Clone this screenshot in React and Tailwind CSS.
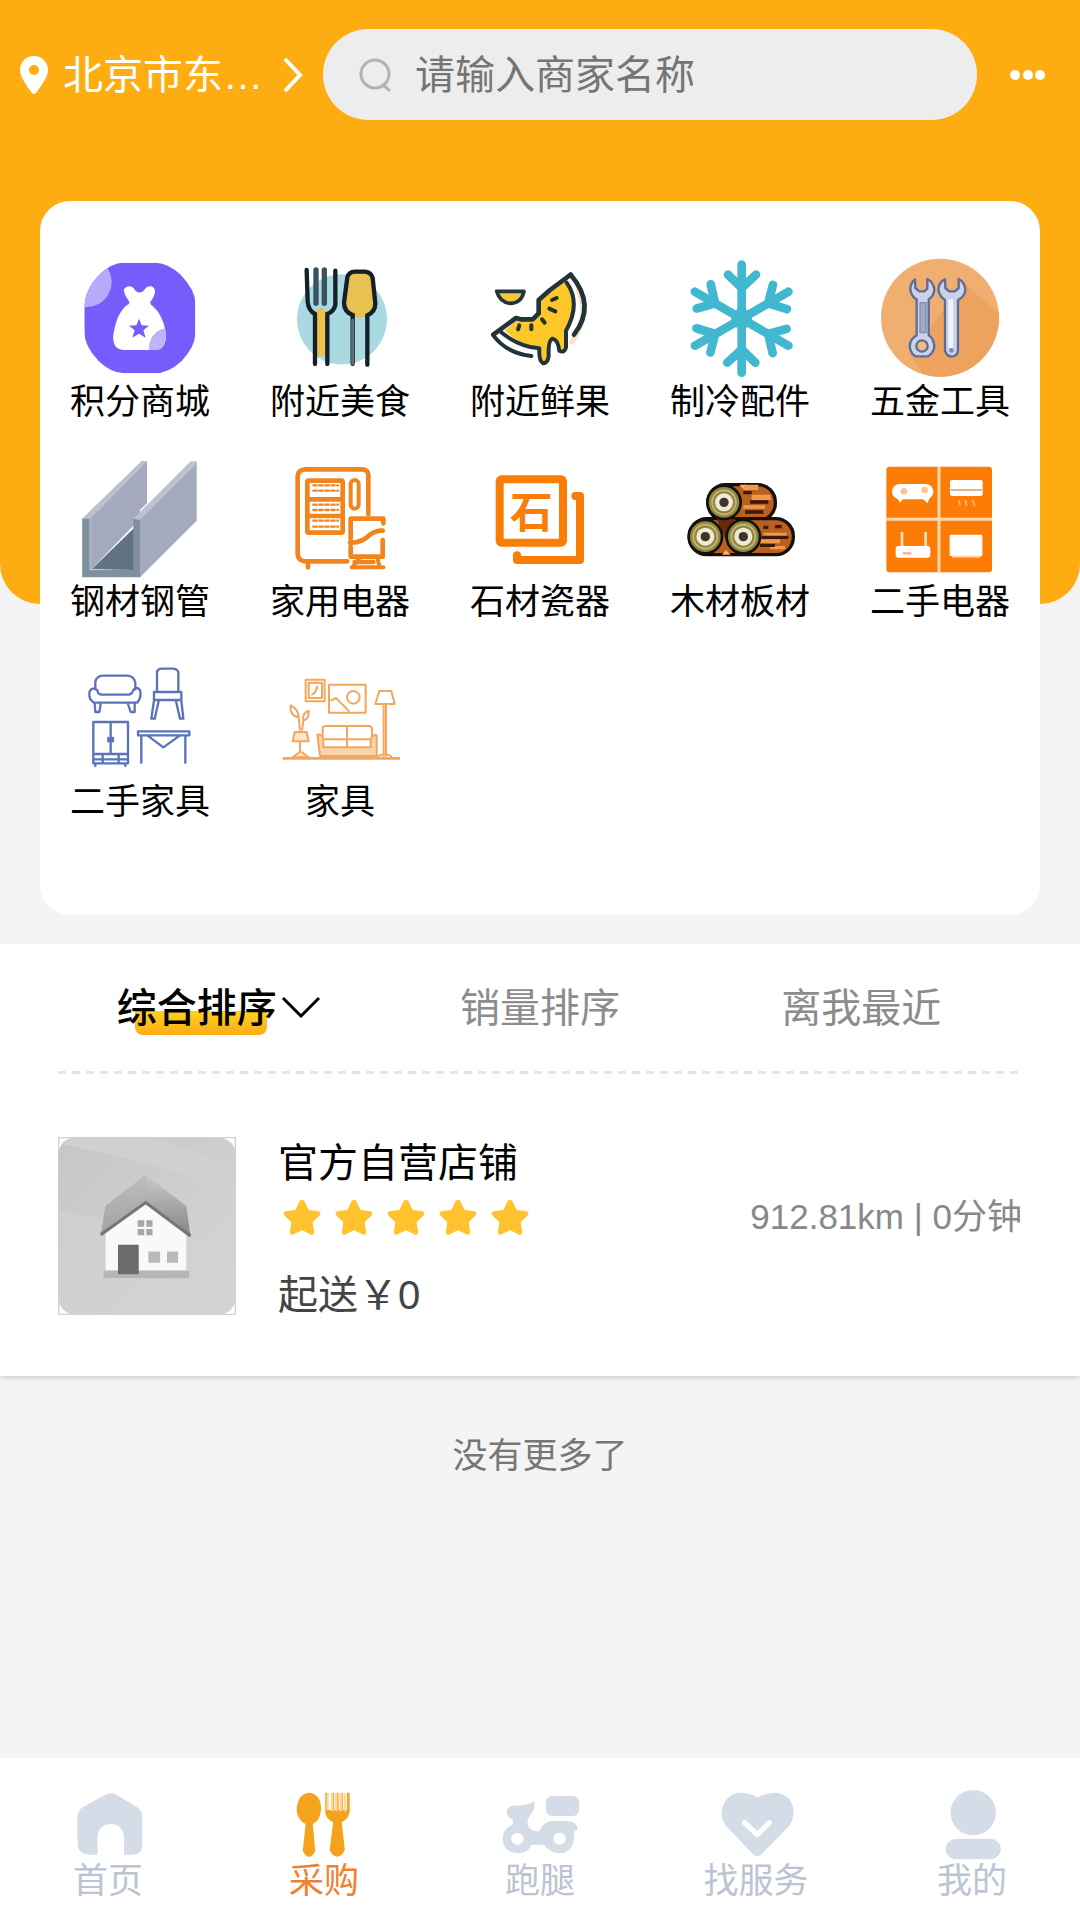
import React, { useState } from 'react';
import { Star } from 'lucide-react';

const iconClass = 'w-[120px] h-[120px]';

const PointsMallIcon = () => (
  <svg viewBox="120 54 360 360" className={iconClass} aria-hidden="true">
    <defs>
      <clipPath id="points-tile">
        <path d="M133 205Q133 150 178 104Q215 68 250 68H348Q385 70 422 104Q466 150 466 190V280Q466 320 424 364Q385 400 345 400H252Q212 398 175 362Q133 318 133 275Z" />
      </clipPath>
      <clipPath id="points-bag">
        <path d="M260 196Q272 192 266 182Q250 160 252 148Q262 132 280 143Q298 172 318 143Q338 132 345 150Q346 168 332 184Q328 194 338 198Q366 222 376 270Q384 328 346 330H252Q216 328 220 285Q230 220 260 196Z" />
      </clipPath>
    </defs>
    <g clipPath="url(#points-tile)">
      <rect x="130" y="64" width="340" height="340" fill="#785cfb" />
      <circle cx="140" cy="126" r="75" fill="#b8a9fb" />
    </g>
    <g clipPath="url(#points-bag)">
      <rect x="210" y="130" width="180" height="205" fill="#fff" />
      <circle cx="385" cy="322" r="58" fill="#c0b3fc" />
    </g>
    <path d="M297 236L305 256L327 257L310 271L317 293L297 281L277 293L284 271L267 257L289 256Z" fill="#785cfb" />
  </svg>
);

const FoodIcon = () => (
  <svg viewBox="720 54 360 360" className={iconClass} fill="none" strokeLinecap="round" aria-hidden="true">
    <circle cx="906" cy="238" r="135" fill="#a9dae1" />
    <path d="M828 216Q842 192 858 216V348H828Z" fill="#efc04d" />
    <path d="M958 232Q925 232 912 200L922 105Q930 94 958 94Q988 94 996 105L1006 200Q995 232 958 232Z" fill="#e9c052" />
    <g stroke="#141f27" strokeWidth="13">
      <path d="M800 90L803 185Q805 212 825 222V372" />
      <path d="M886 92V195Q882 214 862 222V372" />
      <path d="M828 90V190M853 90V190" stroke="#38535f" strokeWidth="16" />
      <path d="M938 372V225Q912 215 912 188L922 112Q926 96 945 95H975Q994 97 998 114L1006 190Q1006 216 982 226V374" />
      <path d="M938 240V372" stroke="#5b7079" strokeWidth="9" />
    </g>
  </svg>
);

const FruitIcon = () => (
  <svg viewBox="90 54 360 360" className={iconClass} fill="none" strokeLinecap="round" strokeLinejoin="round" aria-hidden="true">
    <path d="M385 150Q420 230 366 306" stroke="#ffe2c4" strokeWidth="16" />
    <path d="M140 154H222Q214 190 180 190Q150 188 140 154Z" fill="#f5c53c" stroke="#22343b" strokeWidth="11" />
    <path d="M165 271L205 238H248L268 215V182L322 128L350 124Q382 165 372 225Q362 262 348 278V325Q345 340 328 334L318 302Q304 294 296 308V360Q282 380 268 360V320Q205 315 165 271Z" fill="#fdc727" />
    <path d="M130 284L198 234L212 238H248L266 220V180L300 150L362 104" stroke="#22343b" strokeWidth="14" />
    <path d="M362 104Q440 195 372 284" stroke="#22343b" strokeWidth="14" />
    <path d="M350 128Q394 190 348 272V322Q344 340 328 332Q324 300 308 296Q294 300 296 350Q292 370 280 370Q266 364 268 325Q205 320 150 274" stroke="#22343b" strokeWidth="12" />
    <path d="M130 286Q170 340 244 348" stroke="#22343b" strokeWidth="12" />
    <g stroke="#27302c" strokeWidth="12">
      <path d="M306 180L320 174M298 206L316 214M276 238L284 248M244 256V268M208 256L204 268" />
    </g>
  </svg>
);

const snowArm = 'M875 236V74M875 144L834 104M875 144L918 104';

const SnowIcon = () => (
  <svg viewBox="690 54 360 360" className={iconClass} fill="none" stroke="#42b7d0" strokeWidth="26" strokeLinecap="round" aria-hidden="true">
    {[0, 60, 120, 180, 240, 300].map((angle) => (
      <path key={angle} d={snowArm} transform={`rotate(${angle} 875 236)`} />
    ))}
    <circle cx="875" cy="236" r="18" fill="#42b7d0" />
    <g fill="#42b7d0" stroke="none">
      {[0, 60, 120, 180, 240, 300].map((angle) => (
        <path key={angle} d="M875 172L848 118H902Z" transform={`rotate(${angle} 875 236)`} />
      ))}
    </g>
  </svg>
);

const ToolsIcon = () => (
  <svg viewBox="150 54 360 360" className={iconClass} strokeLinejoin="round" aria-hidden="true">
    <defs>
      <clipPath id="tools-disc">
        <circle cx="330" cy="233" r="177" />
      </clipPath>
    </defs>
    <circle cx="330" cy="233" r="177" fill="#f0ae70" />
    <path d="M400 130L520 230V420H290L240 345Z" fill="#eda35d" clipPath="url(#tools-disc)" />
    <g stroke="#5d6c9c" strokeWidth="7" fill="#cdd3e6">
      <path d="M255 118Q240 130 241 150Q246 172 260 178V286Q240 296 239 320Q244 345 258 349H294Q312 338 313 318Q310 294 296 286V178Q312 168 313 148Q310 126 292 117V146L283 154H268L256 144Z" />
      <path d="M345 118Q326 126 325 150Q330 172 345 180V332Q350 350 366 350Q382 348 384 332V180Q404 170 406 150Q404 126 386 117V144L374 154H358L346 144Z" />
      <circle cx="276" cy="318" r="17" fill="#f3b982" />
      <path d="M270 188V278H288V188Z" fill="#a2aac3" stroke="#7f8db2" strokeWidth="4" />
    </g>
    <path d="M362 178V325" stroke="#f4f5fb" strokeWidth="14" />
    <circle cx="364" cy="331" r="7" fill="#7c89b0" />
  </svg>
);

const SteelIcon = () => (
  <svg viewBox="120 54 360 360" className={iconClass} aria-hidden="true">
    <path d="M127 236L305 64H321V190L300 210V236L150 392L127 412Z" fill="#a4a9bd" />
    <path d="M127 236L305 64H321L148 240Z" fill="#bbc0d0" />
    <path d="M155 388L282 264V390Z" fill="#5f7380" />
    <path d="M127 236H148V390H280V236H302V412H127Z" fill="#7f909f" />
    <path d="M148 236H155V384L148 392Z" fill="#a9b2c2" />
    <path d="M300 236L470 66V242L300 412Z" fill="#a4a9bd" />
    <path d="M280 236L452 64H470V72L300 240Z" fill="#bcc1d1" />
  </svg>
);

const ApplianceIcon = () => (
  <svg viewBox="720 54 360 360" className={iconClass} fill="none" stroke="#f1841d" strokeWidth="14" strokeLinecap="round" strokeLinejoin="round" aria-hidden="true">
    <path d="M985 222V105Q984 88 965 88H795Q774 90 773 108V342Q774 362 795 364H922M804 368V382" />
    <rect x="802" y="122" width="106" height="156" rx="4" />
    <path d="M806 178H904M806 228H904" />
    <g strokeWidth="7" strokeDasharray="10 8">
      <path d="M820 136H894M820 152H894M820 194H894M820 210H894M820 242H894M820 260H894" />
    </g>
    <rect x="932" y="120" width="24" height="86" rx="12" strokeWidth="12" />
    <path d="M1030 250V236H932V296M930 308Q965 310 990 284Q1010 270 1028 272M932 320V350H1028V300" />
    <path d="M935 382H1030M958 354L940 378M1012 354L1018 378" strokeWidth="12" />
    <path d="M944 366H1000" />
  </svg>
);

const StoneIcon = () => (
  <svg viewBox="90 54 360 360" className={iconClass} fill="none" stroke="#f97d06" strokeWidth="24" strokeLinecap="round" strokeLinejoin="round" aria-hidden="true">
    <rect x="149" y="118" width="190" height="190" rx="6" />
    <path d="M376 168H390V360H201V346" />
    <text x="244" y="263" fontSize="128" fontWeight="700" textAnchor="middle" fill="#f97d06" stroke="none" fontFamily="Noto Sans CJK SC, sans-serif">石</text>
  </svg>
);

const logEnds = [
  { x: 822, y: 187 },
  { x: 766, y: 290 },
  { x: 880, y: 290 },
];

const WoodIcon = () => (
  <svg viewBox="690 54 360 360" className={iconClass} aria-hidden="true">
    <rect x="774" y="134" width="202" height="108" rx="52" fill="#b9601f" stroke="#14100c" strokeWidth="10" />
    <rect x="718" y="236" width="312" height="108" rx="52" fill="#b9601f" stroke="#14100c" strokeWidth="10" />
    <path d="M800 238H856L828 300Z" fill="#6b2a10" />
    <path d="M880 134H925V150H880ZM905 164H962V180H905ZM880 196H945V206H880Z" fill="#f1984b" />
    <path d="M940 278H1010V288H940ZM925 298H990V310H925ZM960 318H1005V328H960Z" fill="#f1984b" />
    <path d="M880 158H905M900 186H955M885 216H940M940 262H955M975 260H995M935 292H1015M930 316H975" stroke="#3b190b" strokeWidth="10" />
    <path d="M868 134H888L878 146ZM816 344L828 330L842 344Z" fill="#f6b070" />
    {logEnds.map(({ x, y }) => (
      <g key={x}>
        <circle cx={x} cy={y} r="50" fill="#8f8745" stroke="#14100c" strokeWidth="8" />
        <circle cx={x} cy={y} r="36" fill="none" stroke="#c5bb6b" strokeWidth="5" />
        <circle cx={x} cy={y} r="27" fill="#f2e8d6" />
        <circle cx={x} cy={y} r="14" fill="#3d3526" />
      </g>
    ))}
  </svg>
);

const UsedApplianceIcon = () => (
  <svg viewBox="150 654 360 360" className={iconClass} aria-hidden="true">
    <rect x="169" y="680" width="317" height="317" rx="10" fill="#fc7c05" />
    <path d="M327 680V997M169 838H486" stroke="#ffd9ae" strokeWidth="9" />
    <rect x="186" y="732" width="124" height="46" rx="23" fill="#fff" />
    <path d="M198 768L210 788L224 772ZM274 772L292 790L302 768Z" fill="#fff" />
    <circle cx="222" cy="754" r="10" fill="#ffc48c" />
    <circle cx="284" cy="750" r="10" fill="#ffc48c" />
    <rect x="360" y="720" width="98" height="48" rx="6" fill="#fff" />
    <path d="M362 750H456" stroke="#dca673" strokeWidth="5" />
    <path d="M386 780L390 796M406 780L410 798M428 780L434 798" stroke="#ffb36b" strokeWidth="6" />
    <path d="M216 876V922M287 876V922" stroke="#ffe0c0" strokeWidth="8" />
    <rect x="197" y="918" width="104" height="35" rx="8" fill="#fff" />
    <path d="M218 940H244" stroke="#ffb88d" strokeWidth="8" />
    <rect x="359" y="884" width="98" height="64" rx="3" fill="#fff" />
    <path d="M366 950H452" stroke="#ffd0a0" strokeWidth="6" />
  </svg>
);

const UsedFurnitureIcon = () => (
  <svg viewBox="120 54 360 360" className={iconClass} fill="none" stroke="#5b74b8" strokeWidth="7" strokeLinecap="round" strokeLinejoin="round" aria-hidden="true">
    <path d="M166 148V125Q170 108 188 107H262Q282 108 286 128V148M172 150V152Q174 164 186 164H264Q276 164 280 150Q290 138 300 150Q306 170 292 188H162Q144 178 149 154Q156 140 172 150" />
    <path d="M164 190L166 216H178L182 192M264 192L272 216H284V190" />
    <path d="M351 154V95Q354 86 365 86H400Q414 88 415 98V154M342 156H424V180H342ZM342 182L334 236H344L356 184M408 184L420 236H430L424 182" />
    <path d="M160 246H264V370H160ZM212 246V342M160 342H264M160 358H264M205 294V304M219 294V304M188 344V366M236 344V366M166 372V378M256 372V378" />
    <path d="M294 274H448V286H294ZM304 288V368M436 288V368M322 286L370 322L420 286" />
  </svg>
);

const FurnitureIcon = () => (
  <svg viewBox="720 54 360 360" className={iconClass} fill="none" stroke="#f2a75d" strokeWidth="6" strokeLinejoin="round" aria-hidden="true">
    <path d="M728 355H1080" strokeWidth="8" />
    <path d="M797 119H854V184H797ZM806 128H846V174H806ZM832 138Q828 160 814 164" />
    <path d="M867 134H977V218H867ZM872 182L888 174L928 214" />
    <circle cx="940" cy="172" r="19" />
    <path d="M1018 153H1054L1064 192H1006ZM1031 194V350M1038 194V350M1012 350Q1034 336 1056 350" />
    <path d="M752 196Q748 226 776 232Q776 208 752 196ZM806 212Q784 222 790 242Q808 236 806 212ZM776 232L780 272M790 242L786 272" />
    <path d="M764 276H800L806 304H758ZM780 306V335L758 352H806L784 335" fill="#fde3c8" />
    <path d="M832 284Q846 280 850 298V322H992V298Q998 282 1010 286V348H840Z" fill="#fbd5aa" />
    <path d="M848 290V262Q850 258 860 258H988Q996 260 996 268V290M921 260V320M850 298H992" />
  </svg>
);

const categories = [
  { name: '积分商城', icon: PointsMallIcon },
  { name: '附近美食', icon: FoodIcon },
  { name: '附近鲜果', icon: FruitIcon },
  { name: '制冷配件', icon: SnowIcon },
  { name: '五金工具', icon: ToolsIcon },
  { name: '钢材钢管', icon: SteelIcon },
  { name: '家用电器', icon: ApplianceIcon },
  { name: '石材瓷器', icon: StoneIcon },
  { name: '木材板材', icon: WoodIcon },
  { name: '二手电器', icon: UsedApplianceIcon },
  { name: '二手家具', icon: UsedFurnitureIcon },
  { name: '家具', icon: FurnitureIcon },
];

const navItems = [
  {
    name: '首页',
    box: '209 87 209 216',
    icon: (
      <path d="M306 104Q322 96 338 104L398 142Q413 152 413 170V258Q410 284 385 284H360V230Q357 194 322 192Q286 194 283 230V284H258Q228 282 225 255V170Q226 152 240 142Z" />
    ),
  },
  {
    name: '采购',
    box: '836 87 209 216',
    icon: (
      <>
        <path d="M897 98Q932 102 932 148Q930 182 908 192L915 272Q908 290 897 290Q886 290 879 272L887 192Q862 180 861 148Q864 102 897 98Z" />
        <path d="M944 98H951V150H964V98H970V150H976V98H983V150H989V98H995V150H1007V98H1015V155Q1012 176 992 187L1001 270Q992 290 979 290Q964 288 957 270L967 187Q944 174 944 155Z" />
        <path d="M951 100V150M964 100V154M976 100V154M989 100V154M1001 100V154" stroke="#fbd79b" strokeWidth="7" />
      </>
    ),
  },
  {
    name: '跑腿',
    box: '1464 87 209 216',
    icon: (
      <>
        <rect x="1586" y="108" width="96" height="60" rx="18" />
        <path
          fillRule="evenodd"
          d="M1552 124Q1556 148 1540 165Q1524 190 1540 206Q1550 216 1566 213Q1574 190 1600 183H1650Q1674 184 1678 208Q1678 214 1667 212Q1672 278 1626 280Q1594 276 1580 254H1544Q1536 278 1503 280Q1462 276 1460 236Q1462 206 1488 195Q1492 188 1488 178Q1468 170 1474 148Q1480 134 1500 137Q1528 138 1552 124ZM1503 218A18 18 0 1 0 1503 254A18 18 0 1 0 1503 218ZM1625 218A18 18 0 1 0 1625 254A18 18 0 1 0 1625 218Z"
        />
      </>
    ),
  },
  {
    name: '找服务',
    box: '523 87 209 216',
    icon: (
      <>
        <path d="M631 113Q655 98 685 98Q735 104 737 160Q735 186 718 204L642 284Q631 292 620 284L546 204Q528 184 527 160Q532 104 582 98Q610 98 631 113Z" />
        <path d="M594 188L631 224L666 188" fill="none" stroke="#fff" strokeWidth="15" strokeLinecap="round" strokeLinejoin="round" />
      </>
    ),
  },
  {
    name: '我的',
    box: '1150 87 209 216',
    icon: (
      <>
        <ellipse cx="1258" cy="158" rx="66" ry="68" />
        <rect x="1178" y="236" width="160" height="62" rx="31" />
      </>
    ),
  },
];

const StoreThumb = () => (
  <svg viewBox="168 622 516 532" preserveAspectRatio="none" className="w-[178px] h-[178px] shrink-0" role="img" aria-label="店铺图片">
    <defs>
      <linearGradient id="thumb-bg" x1="0" y1="0" x2="1" y2="1">
        <stop offset="0" stopColor="#c6c6c6" />
        <stop offset="1" stopColor="#d6d6d6" />
      </linearGradient>
      <linearGradient id="thumb-roof" x1="0" y1="0" x2="0" y2="1">
        <stop offset="0" stopColor="#c9c9c9" />
        <stop offset="1" stopColor="#858585" />
      </linearGradient>
      <clipPath id="thumb-clip">
        <rect x="170" y="624" width="512" height="528" rx="48" />
      </clipPath>
    </defs>
    <rect x="170" y="624" width="512" height="528" fill="#fff" stroke="#d2d2d2" strokeWidth="4" />
    <g clipPath="url(#thumb-clip)">
      <rect x="168" y="622" width="516" height="532" fill="url(#thumb-bg)" />
      <path d="M440 622L684 710V790Q600 750 380 690L168 640V622Z" fill="#d0d0d0" />
      <path d="M168 840L684 948V1154H168Z" fill="#d2d2d2" opacity="0.6" />
    </g>
    <rect x="300" y="1022" width="248" height="22" fill="#a9a9a9" opacity="0.7" />
    <path d="M306 900L422 822L540 900V1020H306Z" fill="#f9f9f9" />
    <path d="M422 735L540 828L552 918L422 818L292 916L306 828Z" fill="url(#thumb-roof)" />
    <path d="M422 735L306 828L292 910L424 810Z" fill="#b5b5b5" opacity="0.6" />
    <path d="M292 914L422 818L552 918" fill="none" stroke="#767676" strokeWidth="9" />
    <rect x="342" y="944" width="60" height="88" fill="#6b6b6b" />
    <path d="M399 871H418V890H399ZM424 871H442V890H424ZM399 897H418V916H399ZM424 897H442V916H424Z" fill="#a6a6a6" />
    <path d="M430 964H464V998H430ZM484 964H516V998H484Z" fill="#b9b9b9" />
  </svg>
);

const SortTabs = ({ sort, setSort }) => {
  return (
    <div className="grid grid-cols-3 h-[127px] items-center">
      {['综合排序', '销量排序', '离我最近'].map((name, i) => (
        <button
          key={name}
          onClick={() => setSort(i)}
          className={
            sort === i
              ? 'flex items-center justify-center gap-1 text-[40px] leading-[52px] font-medium text-black cursor-pointer'
              : 'flex items-center justify-center text-[40px] leading-[52px] text-[#8c8c8c] cursor-pointer'
          }
        >
          <span className="relative isolate">
            {sort === i && (
              <span className="absolute -z-10 left-[18px] right-[10px] -bottom-px h-6 rounded-b-lg bg-linear-to-b from-[#ffd21c] to-[#fbab16]" />
            )}
            {name}
          </span>
          {i === 0 && (
            <svg viewBox="0 0 40 24" className="w-10 h-6" fill="none" stroke="currentColor" strokeWidth="3" aria-hidden="true">
              <path d="M2 2L20 20L38 2" />
            </svg>
          )}
        </button>
      ))}
    </div>
  );
};

const App = () => {
  const [sort, setSort] = useState(0);
  const [active, setActive] = useState(1);
  const [keyword, setKeyword] = useState('');

  return (
    <div className="min-h-screen flex flex-col bg-[#f4f4f4] font-['Liberation_Sans','Noto_Sans_CJK_SC',sans-serif]">
      {/* Header */}
      <header className="flex items-center pt-[29px] pb-[484px] pl-5 pr-[34px] rounded-b-[40px] bg-[#fdad11] text-white">
        <button className="flex items-center shrink-0 cursor-pointer">
          <svg viewBox="0 0 28 38" className="w-7 h-[38px]" fill="#fff" fillRule="evenodd" aria-hidden="true">
            <path d="M14 0C6 0 0 6 0 14C0 21 7 30 12 37Q14 39 16 37C21 30 28 21 28 14C28 6 22 0 14 0ZM14 9A5 5 0 1 1 14 19A5 5 0 1 1 14 9Z" />
          </svg>
          <span className="w-[200px] ml-[15px] text-left text-[40px] leading-[52px] whitespace-nowrap">北京市东…</span>
          <svg viewBox="0 0 20 36" className="w-5 h-9 ml-5" fill="none" stroke="#fff" strokeWidth="4" aria-hidden="true">
            <path d="M2 2L17 18L2 34" />
          </svg>
        </button>
        <label className="flex flex-1 min-w-0 items-center h-[91px] ml-5 pl-9 pr-6 rounded-full bg-[#ededed]">
          <svg viewBox="0 0 32 34" className="w-8 h-[34px] shrink-0" fill="none" stroke="#b3b3b3" strokeWidth="3" strokeLinecap="round" aria-hidden="true">
            <circle cx="16" cy="16" r="14" />
            <path d="M24 27L30 32" />
          </svg>
          <input
            type="text"
            aria-label="搜索商家"
            value={keyword}
            onChange={(e) => setKeyword(e.target.value)}
            placeholder="请输入商家名称"
            className="flex-1 min-w-0 ml-6 bg-transparent text-[40px] leading-[52px] text-gray-800 placeholder:text-[#757575] focus:outline-none"
          />
        </label>
        <button aria-label="更多" className="ml-8 shrink-0 cursor-pointer">
          <svg viewBox="0 0 37 12" className="w-[37px] h-3" fill="#fff" aria-hidden="true">
            <circle cx="6" cy="6" r="5" />
            <circle cx="19" cy="6" r="5" />
            <circle cx="31" cy="6" r="5" />
          </svg>
        </button>
      </header>

      {/* Categories */}
      <section className="-mt-[403px] mx-10 py-[57px] rounded-[30px] bg-white grid grid-cols-5">
        {categories.map(({ name, icon: Icon }) => (
          <a key={name} href="#" className="flex flex-col items-center pb-8 text-[35px] leading-[48px] text-black">
            <Icon />
            {name}
          </a>
        ))}
      </section>

      {/* Store list */}
      <section className="mt-[29px] px-[58px] pb-[55px] bg-white shadow-md">
        <SortTabs sort={sort} setSort={setSort} />
        <div className="h-[3px] bg-[repeating-linear-gradient(90deg,#e4e4e4_0_8px,transparent_8px_14px)]" />
        <a href="#" className="flex pt-[63px]">
          <StoreThumb />
          <div className="ml-[42px]">
            <h2 className="text-[40px] leading-[52px] text-black">官方自营店铺</h2>
            <div className="flex gap-3 mt-[9px] pl-1">
              {[1, 2, 3, 4, 5].map((n) => (
                <Star key={n} className="w-10 h-10 text-[#fec32f] fill-[#fec32f]" />
              ))}
            </div>
            <p className="mt-[31px] text-[40px] leading-[52px] text-[#444]">起送￥0</p>
          </div>
          <p className="ml-auto mt-14 text-[35px] leading-[48px] text-[#888]">912.81km | 0分钟</p>
        </a>
      </section>

      <p className="py-14 text-center text-[35px] leading-[48px] text-[#777]">没有更多了</p>

      {/* Bottom navigation */}
      <nav className="sticky bottom-0 mt-auto grid grid-cols-5 pt-[31px] pb-[19px] bg-white">
        {navItems.map(({ name, box, icon }, i) => (
          <button
            key={name}
            onClick={() => setActive(i)}
            className={
              active === i
                ? 'flex flex-col items-center text-[35px] leading-10 text-[#f08030] cursor-pointer'
                : 'flex flex-col items-center text-[35px] leading-10 text-[#bcc3d2] cursor-pointer'
            }
          >
            <svg
              viewBox={box}
              preserveAspectRatio="none"
              overflow="visible"
              className={active === i ? 'w-[72px] h-[72px] fill-[#f5a31c]' : 'w-[72px] h-[72px] fill-[#d4dce7]'}
              aria-hidden="true"
            >
              {icon}
            </svg>
            {name}
          </button>
        ))}
      </nav>
    </div>
  );
};

export default App;
